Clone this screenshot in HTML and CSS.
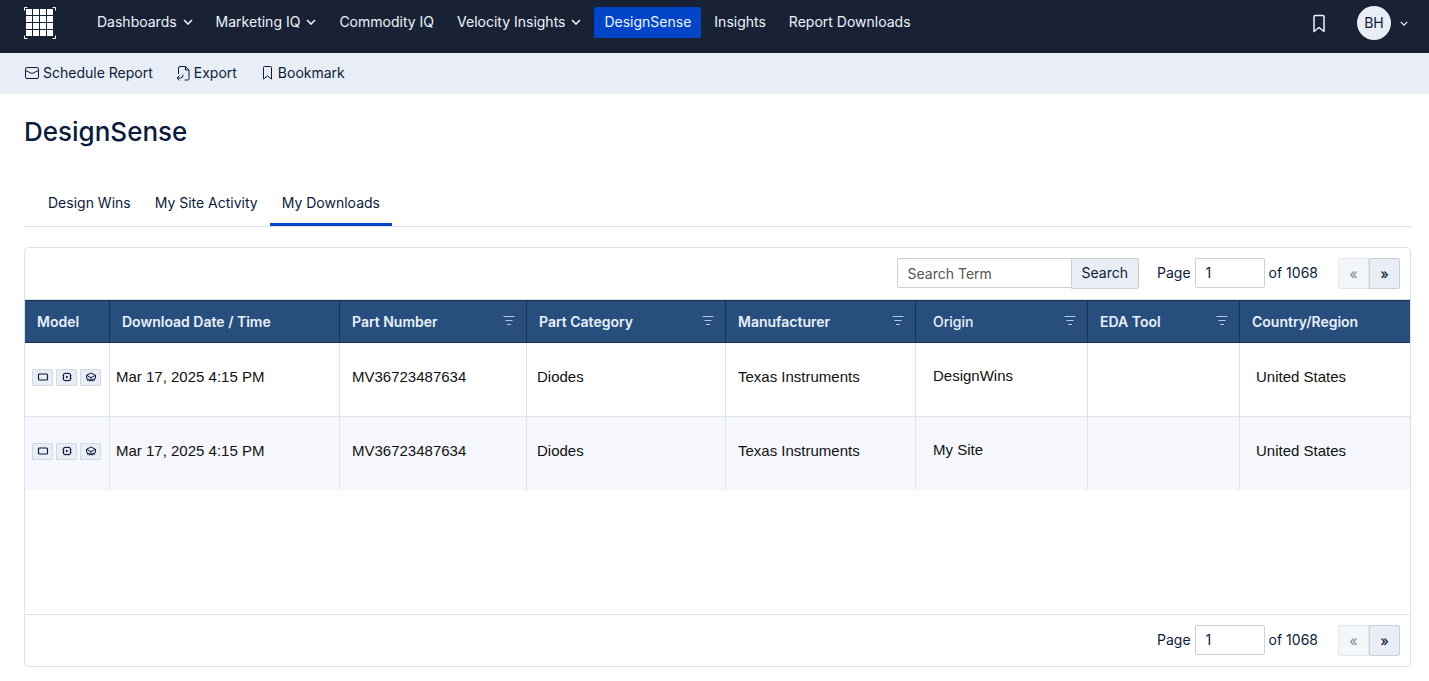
FILE: index.html
```html
<!DOCTYPE html>
<html lang="en">
<head>
    <meta charset="UTF-8">
    <meta name="viewport" content="width=device-width, initial-scale=1.0">
    <title>DesignSense</title>
    <link rel="stylesheet" href="styles.css">
</head>
<body>
    <!-- icons shared by the page -->
    <svg class="sprite" aria-hidden="true">
        <symbol id="chevron" viewBox="0 0 10 6">
            <path d="M1 1l4 4 4-4" fill="none" stroke="currentColor" stroke-width="1.6"/>
        </symbol>
        <symbol id="bookmark" viewBox="0 0 12 18">
            <path d="M1 17V2q0-1 1-1h8q1 0 1 1v15l-5-4z" fill="none" stroke="currentColor" stroke-width="1.5" stroke-linejoin="round"/>
        </symbol>
        <symbol id="filter" viewBox="0 0 12 10">
            <path d="M.5 .5h11M2.500 4.500h7M4 8.500h4" fill="none" stroke="currentColor"/>
        </symbol>
        <symbol id="symbol-model" viewBox="0 0 12 10">
            <rect x="1.500" y="2" width="9" height="6" rx="1" fill="none" stroke="currentColor" stroke-width="1.200"/>
        </symbol>
        <symbol id="footprint-model" viewBox="0 0 12 10">
            <rect x="2.500" y="1.500" width="7" height="7" rx="1.500" fill="none" stroke="currentColor" stroke-width="1.200"/>
            <path d="M5 3.500L7.500 5 5 6.500z" fill="currentColor"/>
            <path d="M4.500 .5v1M7.500 .5v1M4.500 8.500v1M7.500 8.500v1M1.500 3.500h1M1.500 6.500h1M9.500 3.500h1M9.500 6.500h1" stroke="currentColor" stroke-width=".8"/>
        </symbol>
        <symbol id="cube-model" viewBox="0 0 12 10">
            <path d="M6 1l4.500 2.300L6 5.600 1.500 3.300zM1.500 3.300v3L6 8.600l4.500-2.300v-3M6 5.600v3M2.800 7v2M9.200 7v2M4.400 8v1.500M7.600 8v1.500" fill="none" stroke="currentColor"/>
        </symbol>
    </svg>

    <header class="topbar">
        <a class="logo" href="#" aria-label="Home">
            <svg width="32" height="32" viewBox="0 0 32 32">
                <g fill="#fff">
                    <path d="M2 2h6v6H2zM9 2h6v6H9zM16 2h6v6h-6zM23 2h6v6h-6z"/>
                    <path d="M2 9h6v6H2zM9 9h6v6H9zM16 9h6v6h-6zM23 9h6v6h-6z"/>
                    <path d="M2 16h6v6H2zM9 16h6v6H9zM16 16h6v6h-6zM23 16h6v6h-6z"/>
                    <path d="M2 23h6v6H2zM9 23h6v6H9zM16 23h6v6h-6zM23 23h6v6h-6z"/>
                </g>
                <path d="M.5 3.500v-3h3M28.500 .5h3v3M31.500 28.500v3h-3M3.500 31.500h-3v-3" fill="none" stroke="#fff"/>
            </svg>
        </a>
        <nav class="nav">
            <a class="nav-link" href="#">Dashboards <svg class="chevron"><use href="#chevron"/></svg></a>
            <a class="nav-link" href="#">Marketing IQ <svg class="chevron"><use href="#chevron"/></svg></a>
            <a class="nav-link" href="#">Commodity IQ</a>
            <a class="nav-link" href="#">Velocity Insights <svg class="chevron"><use href="#chevron"/></svg></a>
            <a class="nav-link active" href="#">DesignSense</a>
            <a class="nav-link" href="#">Insights</a>
            <a class="nav-link" href="#">Report Downloads</a>
        </nav>
        <div class="account">
            <a class="account-bookmark" href="#" aria-label="Bookmarks"><svg width="12" height="19"><use href="#bookmark"/></svg></a>
            <button class="account-menu" type="button">
                <span class="avatar">BH</span>
                <svg class="chevron small"><use href="#chevron"/></svg>
            </button>
        </div>
    </header>

    <div class="actions">
        <button class="action" type="button">
            <svg width="14" height="12" viewBox="0 0 14 12" fill="none" stroke="currentColor">
                <rect x=".5" y=".5" width="13" height="11" rx="1.500"/>
                <path d="M.5 3.500L7 6.500l6.500-3"/>
            </svg>
            Schedule Report
        </button>
        <button class="action" type="button">
            <svg width="14" height="15" viewBox="0 0 14 15" fill="none" stroke="currentColor">
                <path d="M2.500 8V2q0-1.500 1.500-1.500h5.500l3.500 3.500v8.500q0 1.500-1.500 1.500H8.500M9.500 .5V4H13"/>
                <path d="M7 8.500v1q0 2.500-2.500 2.500H1M3.500 9.500L1 12l2.500 2.500"/>
            </svg>
            Export
        </button>
        <button class="action" type="button">
            <svg width="14" height="14" viewBox="0 0 14 14" fill="none" stroke="currentColor">
                <path d="M3.500 13V1.500q0-1 1-1h6q1 0 1 1V13l-4-3z"/>
            </svg>
            Bookmark
        </button>
    </div>

    <main class="page">
        <h1 class="title">DesignSense</h1>

        <nav class="tabs">
            <a class="tab" href="#">Design Wins</a>
            <a class="tab" href="#">My Site Activity</a>
            <a class="tab active" href="#">My Downloads</a>
        </nav>

        <section class="panel">
            <div class="toolbar">
                <form class="search">
                    <input class="field search-field" type="text" placeholder="Search Term" aria-label="Search term">
                    <button class="btn" type="button">Search</button>
                </form>
                <div class="pager">
                    <label for="page-top">Page</label>
                    <input class="field page-field" id="page-top" type="text" value="1">
                    <span>of 1068</span>
                    <div class="pager-buttons">
                        <button class="btn" type="button" aria-label="Previous page" disabled>«</button>
                        <button class="btn" type="button" aria-label="Next page">»</button>
                    </div>
                </div>
            </div>

            <div class="table-area">
                <table class="downloads">
                    <colgroup>
                        <col class="col-model">
                        <col class="col-date">
                        <col class="col-part">
                        <col class="col-category">
                        <col class="col-maker">
                        <col class="col-origin">
                        <col class="col-eda">
                        <col>
                    </colgroup>
                    <thead>
                        <tr>
                            <th>Model</th>
                            <th>Download Date / Time</th>
                            <th><div class="head">Part Number <svg class="filter"><use href="#filter"/></svg></div></th>
                            <th><div class="head">Part Category <svg class="filter"><use href="#filter"/></svg></div></th>
                            <th><div class="head">Manufacturer <svg class="filter"><use href="#filter"/></svg></div></th>
                            <th class="origin"><div class="head">Origin <svg class="filter"><use href="#filter"/></svg></div></th>
                            <th><div class="head">EDA Tool <svg class="filter"><use href="#filter"/></svg></div></th>
                            <th>Country/Region</th>
                        </tr>
                    </thead>
                    <tbody>
                        <tr>
                            <td class="model">
                                <div class="models">
                                    <button class="model-btn" type="button" aria-label="Symbol"><svg><use href="#symbol-model"/></svg></button>
                                    <button class="model-btn" type="button" aria-label="Footprint"><svg><use href="#footprint-model"/></svg></button>
                                    <button class="model-btn" type="button" aria-label="3D model"><svg><use href="#cube-model"/></svg></button>
                                </div>
                            </td>
                            <td class="date">Mar 17, 2025 4:15 PM</td>
                            <td>MV36723487634</td>
                            <td class="category">Diodes</td>
                            <td>Texas Instruments</td>
                            <td class="origin">DesignWins</td>
                            <td></td>
                            <td class="country">United States</td>
                        </tr>
                        <tr>
                            <td class="model">
                                <div class="models">
                                    <button class="model-btn" type="button" aria-label="Symbol"><svg><use href="#symbol-model"/></svg></button>
                                    <button class="model-btn" type="button" aria-label="Footprint"><svg><use href="#footprint-model"/></svg></button>
                                    <button class="model-btn" type="button" aria-label="3D model"><svg><use href="#cube-model"/></svg></button>
                                </div>
                            </td>
                            <td class="date">Mar 17, 2025 4:15 PM</td>
                            <td>MV36723487634</td>
                            <td class="category">Diodes</td>
                            <td>Texas Instruments</td>
                            <td class="origin">My Site</td>
                            <td></td>
                            <td class="country">United States</td>
                        </tr>
                    </tbody>
                </table>
            </div>

            <div class="toolbar bottom">
                <div class="pager">
                    <label for="page-bottom">Page</label>
                    <input class="field page-field" id="page-bottom" type="text" value="1">
                    <span>of 1068</span>
                    <div class="pager-buttons">
                        <button class="btn" type="button" aria-label="Previous page" disabled>«</button>
                        <button class="btn" type="button" aria-label="Next page">»</button>
                    </div>
                </div>
            </div>
        </section>
    </main>
</body>
</html>
```
FILE: styles.css
```css
* {
    box-sizing: border-box;
    margin: 0;
    padding: 0;
}

body {
    display: flex;
    flex-direction: column;
    min-height: 100vh;
    font-family: Inter, "Liberation Sans", sans-serif;
    font-size: 14px;
    line-height: 20px;
    color: #0b1b3b;
    background-color: #fff;
}

a {
    color: inherit;
    text-decoration: none;
}

button,
input {
    font: inherit;
    color: inherit;
}

button {
    cursor: pointer;
}

svg {
    display: block;
    flex: none;
}

.sprite {
    position: absolute;
    width: 0;
    height: 0;
}

/* Top bar */
.topbar {
    display: flex;
    align-items: flex-start;
    padding: 6px 21px 7px 24px;
    min-height: 53px;
    background-color: #182234;
    color: #edf4fc;
}

.logo {
    margin: 1px 31px 0 0;
}

.nav {
    display: flex;
    gap: 3px;
    margin-top: 1px;
}

.nav-link {
    display: flex;
    align-items: center;
    gap: 6px;
    height: 31px;
    padding: 0 10px 2px;
    border-radius: 2px;
}

.nav-link.active {
    background-color: #0045c7;
}

.chevron {
    width: 10px;
    height: 6px;
}

.chevron.small {
    width: 8px;
    height: 5px;
}

.account {
    display: flex;
    align-items: center;
    gap: 32px;
    margin-left: auto;
}

.account-menu {
    display: flex;
    align-items: center;
    gap: 9px;
    border: none;
    background: none;
}

.avatar {
    width: 34px;
    height: 34px;
    border-radius: 50%;
    background-color: #e9eef6;
    color: #0b1b3b;
    line-height: 34px;
    text-align: center;
}

/* Report actions */
.actions {
    display: flex;
    gap: 23px;
    padding: 10px 25px 11px;
    background-color: #e9eef6;
}

.action {
    display: flex;
    align-items: center;
    gap: 4px;
    border: none;
    background: none;
}

/* Page */
.page {
    flex: 1;
    display: flex;
    flex-direction: column;
    padding: 20px 18px 14px 24px;
}

.title {
    font-size: 26px;
    font-weight: 500;
    line-height: 36px;
}

.tabs {
    display: flex;
    margin-top: 30px;
    padding-left: 12px;
    border-bottom: 1px solid #dbe2ea;
}

.tab {
    padding: 13px 12px 10px;
    border-bottom: 3px solid transparent;
}

.tab.active {
    border-bottom-color: #0045c7;
}

.panel {
    flex: 1;
    display: flex;
    flex-direction: column;
    margin-top: 20px;
    border: 1px solid #dbe2ea;
    border-radius: 4px;
}

.toolbar {
    display: flex;
    justify-content: flex-end;
    gap: 18px;
    padding: 10px;
    border-bottom: 1px solid #dbe2ea;
}

.toolbar.bottom {
    border-top: 1px solid #dbe2ea;
    border-bottom: none;
}

.search {
    display: flex;
}

.field {
    height: 30px;
    padding: 0 10px;
    border: 1px solid #cbd0da;
    border-radius: 2px;
    background-color: #fff;
}

.search-field {
    width: 174px;
    border-right: none;
    border-radius: 2px 0 0 2px;
}

.search-field::placeholder {
    color: #555;
}

.btn {
    height: 31px;
    padding: 0 10px 2px;
    border: 1px solid #cbd0da;
    border-radius: 0 2px 2px 0;
    background-color: #e9eef6;
    font-weight: 500;
}

.search .btn {
    font-weight: 400;
}

.btn:disabled {
    border-color: #e3e7ec;
    border-radius: 2px 0 0 2px;
    background-color: #f4f7fa;
    color: #8a93a3;
    cursor: default;
}

.pager {
    display: flex;
    align-items: flex-start;
    gap: 4px;
    line-height: 30px;
}

.page-field {
    width: 70px;
}

.pager-buttons {
    display: flex;
    margin-left: 16px;
}

.pager-buttons .btn {
    width: 31px;
    padding: 0 0 2px;
}

/* Downloads table */
.table-area {
    flex: 1;
}

.downloads {
    width: 100%;
    table-layout: fixed;
    border-collapse: separate;
    border-spacing: 0;
}

.col-model { width: 85px; }
.col-date { width: 230px; }
.col-part { width: 187px; }
.col-category { width: 199px; }
.col-maker { width: 190px; }
.col-origin { width: 172px; }
.col-eda { width: 152px; }

.downloads th {
    height: 43px;
    padding: 0 11px 0 12px;
    border: 1px solid #1b2f50;
    border-left: none;
    background-color: #284e7e;
    color: #e9f1fb;
    font-weight: 600;
    text-align: left;
}

.downloads th:last-child,
.downloads td:last-child {
    border-right: none;
}

.head {
    display: flex;
    align-items: center;
    justify-content: space-between;
}

.filter {
    width: 12px;
    height: 10px;
    margin-bottom: 2px;
    color: #a9cbf5;
}

.downloads td {
    height: 74px;
    padding: 0 0 5px 12px;
    border-right: 1px solid #dbe2ea;
    border-bottom: 1px solid #dbe2ea;
    color: #111;
    font-family: "Liberation Sans", Arial, sans-serif;
    font-size: 15px;
}

.downloads tr:last-child td {
    height: 73px;
    border-bottom: none;
    background-color: #f5f7fc;
}

.downloads td.model { padding-left: 7px; }
.downloads td.date { padding-left: 6px; }
.downloads td.category { padding-left: 10px; }
.downloads td.country { padding-left: 16px; }
.downloads td.origin { padding: 0 0 8px 17px; }

.downloads th.origin {
    padding-left: 17px;
    font-weight: 500;
}

.models {
    display: flex;
    gap: 3px;
}

.model-btn {
    display: flex;
    align-items: center;
    justify-content: center;
    width: 21px;
    height: 17px;
    border: 1px solid #d3d9e3;
    border-radius: 1px;
    background-color: #e9eef6;
    color: #0b1b3b;
}

.model-btn svg {
    width: 12px;
    height: 10px;
}
```
